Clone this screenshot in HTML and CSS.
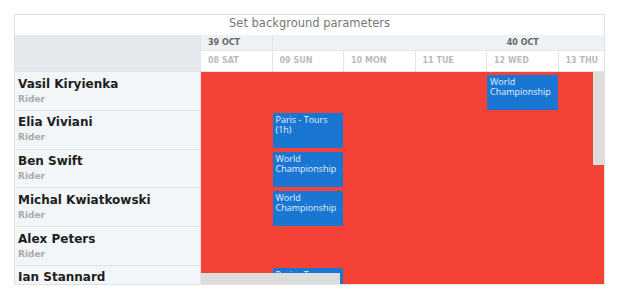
FILE: index.html
```html
<!DOCTYPE html>
<html lang="en">
  <head>
    <meta charset="UTF-8" />
    <meta name="viewport" content="width=device-width, initial-scale=1.0" />
    <title>Scheduler: background</title>
    <link rel="stylesheet" href="styles.css">
  </head>
  <body>
    <div class="scheduler">
      <div class="title">Set background parameters</div>
      <div class="main">
        <!-- resources -->
        <div class="resources">
          <div class="res-head"></div>
          <div class="res-row"><div class="name">Vasil Kiryienka</div><div class="role">Rider</div></div>
          <div class="res-row"><div class="name">Elia Viviani</div><div class="role">Rider</div></div>
          <div class="res-row"><div class="name">Ben Swift</div><div class="role">Rider</div></div>
          <div class="res-row"><div class="name">Michal Kwiatkowski</div><div class="role">Rider</div></div>
          <div class="res-row"><div class="name">Alex Peters</div><div class="role">Rider</div></div>
          <div class="res-row"><div class="name">Ian Stannard</div><div class="role">Rider</div></div>
        </div>

        <!-- timeline -->
        <div class="timeline">
          <div class="weeks">
            <div class="week first">39 OCT</div>
            <div class="week">40 OCT</div>
          </div>
          <div class="days">
            <div class="day">08 SAT</div>
            <div class="day">09 SUN</div>
            <div class="day">10 MON</div>
            <div class="day">11 TUE</div>
            <div class="day">12 WED</div>
            <div class="day">13 THU</div>
            <div class="day">14 FRI</div>
          </div>
          <div class="lanes">
            <div class="lane"><div class="event col-5">World Championship</div></div>
            <div class="lane"><div class="event col-2">Paris - Tours (1h)</div></div>
            <div class="lane"><div class="event col-2">World Championship</div></div>
            <div class="lane"><div class="event col-2">World Championship</div></div>
            <div class="lane"></div>
            <div class="lane"><div class="event col-2">Paris - Tours (1h)</div></div>
          </div>
          <div class="vscroll"></div>
          <div class="hscroll"></div>
        </div>
      </div>
    </div>
  </body>
</html>
```

FILE: styles.css
```css
body {
  margin: 0;
  padding: 14px;
  font-family: "DejaVu Sans", sans-serif;
  background: #fff;
}

.scheduler {
  width: 591px;
  height: 271px;
  box-sizing: border-box;
  border: 1px solid #e2e2e2;
  display: flex;
  flex-direction: column;
  overflow: hidden;
}

.title {
  height: 20px;
  flex: none;
  padding-top: 1px;
  box-sizing: border-box;
  text-align: center;
  font-size: 11.5px;
  line-height: 14px;
  color: #777;
}

.main {
  flex: 1;
  display: flex;
  min-height: 0;
}

/* left column */
.resources {
  width: 186px;
  flex: none;
  box-sizing: border-box;
  border-right: 1px solid #e1e5ea;
  background: #f3f6f9;
  overflow: hidden;
}

.res-head {
  height: 37px;
  box-sizing: border-box;
  background: #e5e9ed;
  border-bottom: 1px solid #dde2e7;
}

.res-row {
  height: 38.8px;
  box-sizing: border-box;
  padding: 4.5px 3px 0;
  border-bottom: 1px solid #dfe3e8;
}

.res-row .name {
  font-size: 12px;
  line-height: 15px;
  font-weight: bold;
  color: #1d1d1d;
}

.res-row .role {
  margin-top: 2px;
  font-size: 9px;
  line-height: 11px;
  font-weight: bold;
  color: #aaa;
}

/* timeline */
.timeline {
  flex: 1;
  position: relative;
  overflow: hidden;
  min-width: 0;
}

.weeks,
.days,
.lane {
  display: grid;
  grid-template-columns: repeat(7, 71.5px);
}

.weeks {
  grid-template-columns: 71.5px 500.5px;
  height: 16px;
  box-sizing: border-box;
  background: #eef2f5;
  border-bottom: 1px solid #e3e7ea;
}

.week {
  font-size: 8px;
  font-weight: bold;
  line-height: 15px;
  color: #666;
  text-align: center;
}

.week.first {
  text-align: left;
  padding-left: 7px;
  border-right: 1px solid #e3e7ea;
}

.days {
  height: 21px;
  box-sizing: border-box;
  background: #fff;
  border-bottom: 1px solid #e3e3e3;
}

.day {
  font-size: 8px;
  font-weight: bold;
  line-height: 20px;
  color: #bbb;
  padding-left: 7px;
  border-right: 1px solid #e3e3e3;
}

.lanes {
  background: #f44336;
  height: 100%;
}

.lane {
  height: 38.8px;
}

.event {
  align-self: start;
  margin-top: 2.5px;
  width: 70.5px;
  height: 35px;
  box-sizing: border-box;
  padding: 2px 3px;
  background: #1976d2;
  color: #e8f1fb;
  font-family: "Open Sans", sans-serif;
  font-size: 9px;
  line-height: 10px;
  overflow: hidden;
}

.col-2 { grid-column: 2; }
.col-5 { grid-column: 5; }

/* overlay scrollbars */
.vscroll {
  position: absolute;
  top: 37px;
  right: 0;
  width: 11px;
  height: 93px;
  background: #dcdcdc;
}

.hscroll {
  position: absolute;
  left: 0;
  bottom: 0;
  width: 139px;
  height: 11px;
  background: #dcdcdc;
}
```
